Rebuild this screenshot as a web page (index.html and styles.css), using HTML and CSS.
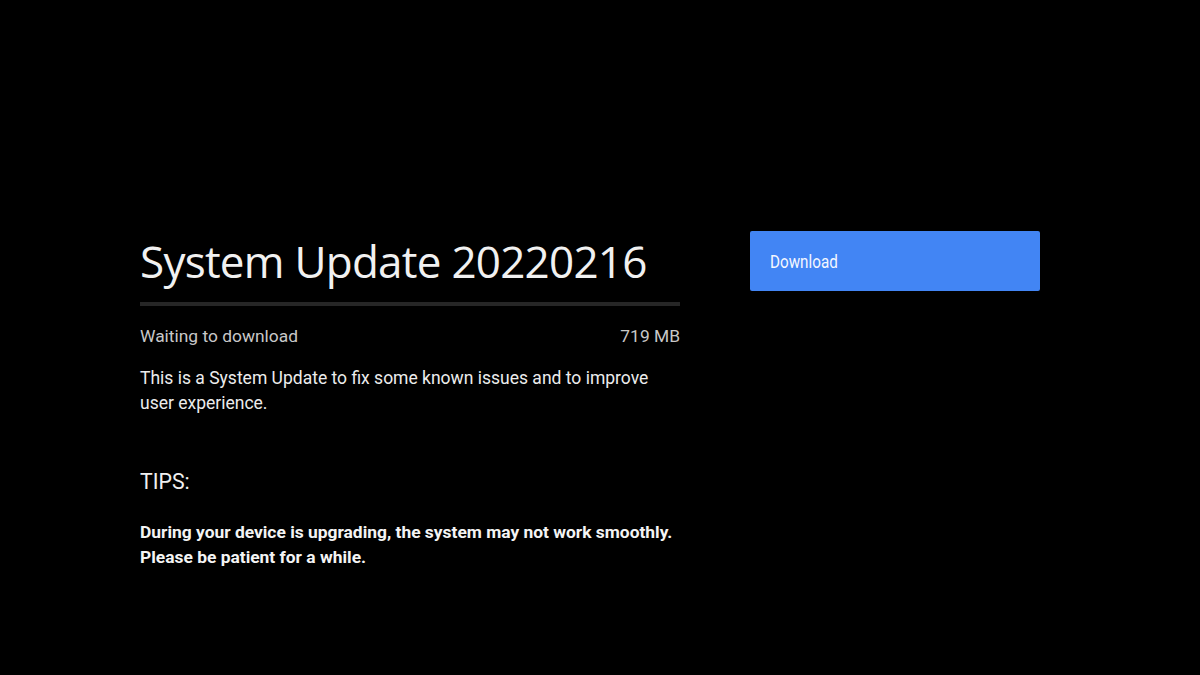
FILE: index.html
```html
<!DOCTYPE html>
<html>
<head>
<meta charset="utf-8">
<link rel="stylesheet" href="styles.css">
</head>
<body>
<div class="screen">
  <div class="content">
    <div class="info">
      <h1 class="title">System Update 20220216</h1>
      <div class="progress"></div>
      <div class="status">
        <span>Waiting to download</span>
        <span>719 MB</span>
      </div>
      <p class="desc">This is a System Update to fix some known issues and to improve user experience.</p>
      <div class="tips">TIPS:</div>
      <p class="tips-text">During your device is upgrading, the system may not work smoothly. Please be patient for a while.</p>
    </div>
    <div class="actions">
      <div class="btn"><span class="btn-label">Download</span></div>
    </div>
  </div>
</div>
</body>
</html>
```
FILE: styles.css
```css
html, body {
  margin: 0;
  padding: 0;
  background: #000;
}
.screen {
  width: 1200px;
  height: 675px;
  background: #000;
  font-family: Roboto, "Liberation Sans", sans-serif;
  color: #fff;
  box-sizing: border-box;
  padding-top: 231px;
  padding-left: 140px;
}
.content {
  display: flex;
  gap: 70px;
}
.info {
  width: 540px;
}
.title {
  margin: 0;
  font-family: "Open Sans", sans-serif;
  font-weight: 400;
  font-size: 44px;
  line-height: 60px;
  color: #f1f1f1;
  letter-spacing: -0.75px;
}
.progress {
  margin-top: 11px;
  height: 4px;
  background: #262626;
}
.status {
  margin-top: 19px;
  display: flex;
  justify-content: space-between;
  font-size: 17.4px;
  line-height: 22px;
  color: #c8c8c8;
}
.desc {
  margin: 19px 0 0;
  font-size: 17.5px;
  line-height: 25px;
  color: #ececec;
}
.tips {
  margin-top: 53px;
  font-size: 21.3px;
  line-height: 26px;
  color: #f0f0f0;
}
.tips-text {
  margin: 25px 0 0;
  font-size: 17.4px;
  font-weight: 700;
  line-height: 25px;
  color: #f4f4f4;
}
.btn {
  width: 290px;
  height: 60px;
  box-sizing: border-box;
  padding-left: 20px;
  display: flex;
  align-items: center;
  background: #4285f4;
  border-radius: 2px;
  font-size: 17.5px;
  color: #f4f7ff;
}
.btn-label {
  display: inline-block;
  transform: scaleX(0.87);
  transform-origin: left center;
  margin-top: 2px;
}
```
